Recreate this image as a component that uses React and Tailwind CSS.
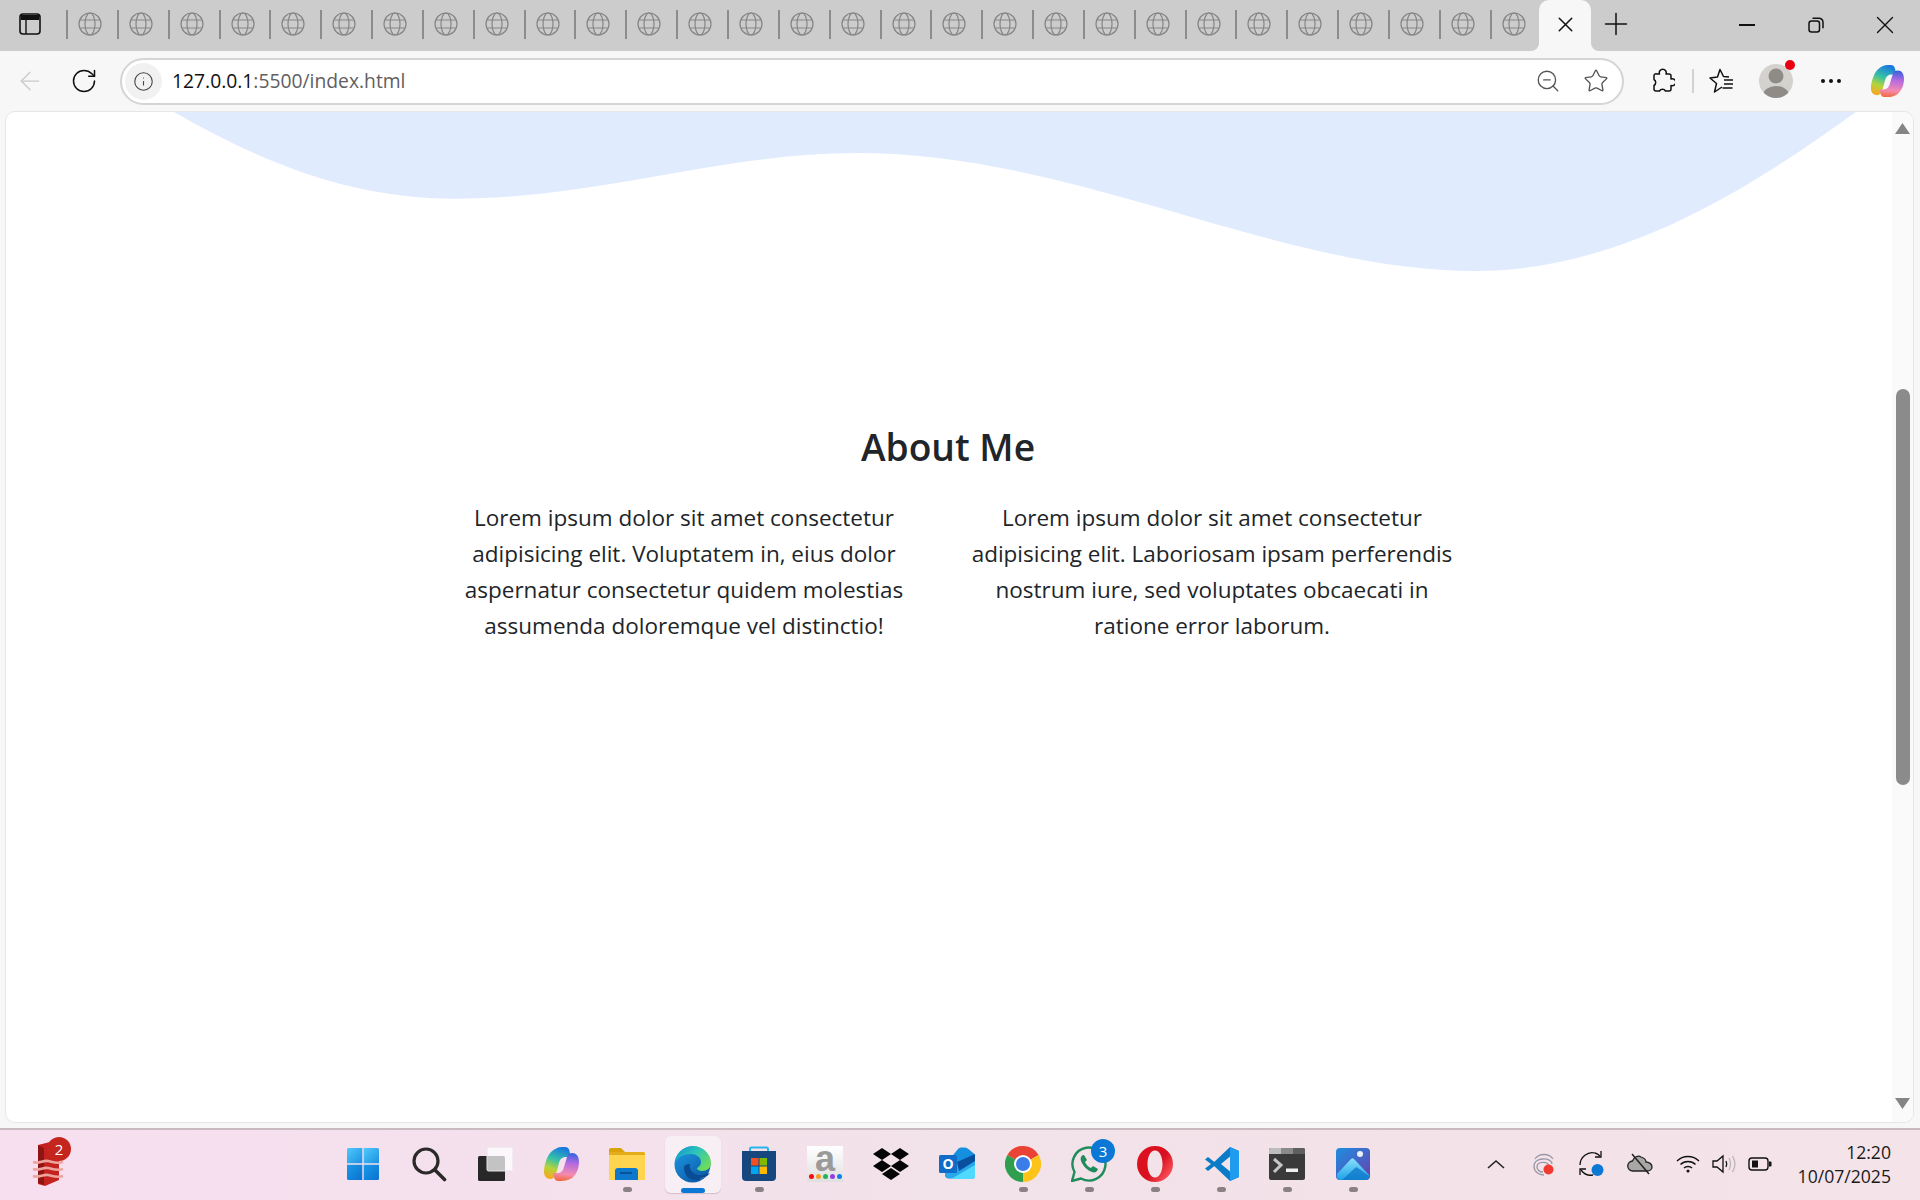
import { ArrowLeft, Info, Plus, RotateCw, Star, X, ZoomOut } from 'lucide-react'

const tabs = Array.from({ length: 29 })

function Globe() {
  return (
    <svg width="24" height="24" viewBox="0 0 24 24" fill="none" stroke="#858585" strokeWidth="1.2">
      <circle cx="12" cy="12" r="11" />
      <ellipse cx="12" cy="12" rx="5" ry="11" />
      <path d="M2 8h20M2 16h20" />
    </svg>
  )
}

function SidebarIcon() {
  return (
    <svg width="22" height="22" viewBox="0 0 22 22" fill="none">
      <rect x="1" y="1" width="20" height="20" rx="3" stroke="#111" strokeWidth="1.6" />
      <path d="M2 2h18v5H2z" fill="#111" />
      <path d="M7 7v14" stroke="#111" strokeWidth="1.4" />
    </svg>
  )
}

function PuzzleIcon() {
  return (
    <svg width="26" height="26" viewBox="0 0 26 26" fill="none" stroke="#111" strokeWidth="1.5" strokeLinejoin="round">
      <path d="M8 6h2.500a3.500 3.500 0 1 1 6.500 0H20a2 2 0 0 1 2 2v3a3.500 3.500 0 1 1 0 6.500V21a2 2 0 0 1-2 2h-3.500a3.500 3.500 0 0 0-6 0H7a2 2 0 0 1-2-2v-3.500a3.500 3.500 0 0 0 0-6V8a2 2 0 0 1 3-2z" />
    </svg>
  )
}

function FavoritesIcon() {
  return (
    <svg width="26" height="26" viewBox="0 0 26 26" fill="none" stroke="#111" strokeWidth="1.5" strokeLinejoin="round">
      <path d="M13 19L5.500 24L7.500 15.500L1 10L8.500 9L11 1.500L14.500 8.500L20 9" />
      <path d="M15 12h9M15 16h9M13.500 20h10" />
    </svg>
  )
}

function RestoreIcon() {
  return (
    <svg width="16" height="16" viewBox="0 0 16 16" fill="none" stroke="#111" strokeWidth="1.5">
      <rect x="1" y="4" width="10.500" height="11" rx="2.500" />
      <path d="M4.500 1.200h6.500a4 4 0 0 1 4 4v6" />
    </svg>
  )
}

function Avatar() {
  return (
    <svg width="36" height="36" viewBox="0 0 36 36">
      <defs>
        <clipPath id="avatarClip">
          <circle cx="18" cy="18" r="17" />
        </clipPath>
      </defs>
      <circle cx="18" cy="18" r="17" fill="#d4d2cf" />
      <g clipPath="url(#avatarClip)" fill="#8f8b87">
        <circle cx="18" cy="13" r="7.500" />
        <ellipse cx="18" cy="32" rx="13" ry="9" />
      </g>
    </svg>
  )
}

function Copilot({ id, size }) {
  return (
    <svg width={size} height={size} viewBox="0 0 36 36">
      <defs>
        <linearGradient id={`${id}a`} x1="0.6" y1="0" x2="0.3" y2="1">
          <stop offset="0" stopColor="#1a78e0" />
          <stop offset="0.4" stopColor="#35c1a8" />
          <stop offset="0.7" stopColor="#b4d43a" />
          <stop offset="1" stopColor="#f7a823" />
        </linearGradient>
        <linearGradient id={`${id}b`} x1="0.5" y1="0" x2="0.4" y2="1">
          <stop offset="0" stopColor="#3a62e0" />
          <stop offset="0.35" stopColor="#b66ae0" />
          <stop offset="0.75" stopColor="#f48bb0" />
          <stop offset="1" stopColor="#f26a3c" />
        </linearGradient>
      </defs>
      <path d="M19 1h3c2.500 0 4 1.500 4.500 4L28 11h-5c-4 0-6 2-7 6l-3 11c-1 3-3 5-6 5-3.500 0-6-3-6-7 0-7 3-16 7-20 3-3 7-5 11-5z" fill={`url(#${id}a)`} />
      <path d="M18 35h-3c-2 0-3.500-1.500-4-4l-1-4h4c4 0 6-2 7-6l3-10c1-3 3-4 5.500-4 4 0 6.500 3.500 6.500 9 0 7-3 13-7 16-3 2-7 3-11 3z" fill={`url(#${id}b)`} />
    </svg>
  )
}

function RedStack() {
  return (
    <svg width="32" height="46" viewBox="0 0 32 46">
      <path d="M6 4l12-3 9 4v34l-14 6-7-2z" fill="#c3221f" />
      <path d="M6 4l6 3v37l-6-2z" fill="#8f1514" />
      <g fill="none" stroke="#eda49c" strokeWidth="2.600">
        <path d="M1 21c6 2 10-2 15-1s9 3 15 1" />
        <path d="M1 28c6 2 10-2 15-1s9 3 15 1" />
        <path d="M1 35c6 2 10-2 15-1s9 3 15 1" />
      </g>
    </svg>
  )
}

function WindowsLogo() {
  return (
    <svg width="36" height="36" viewBox="0 0 36 36">
      <defs>
        <linearGradient id="winTop" x1="0" y1="0" x2="1" y2="1">
          <stop offset="0" stopColor="#52c9fb" />
          <stop offset="1" stopColor="#1a90e2" />
        </linearGradient>
        <linearGradient id="winBottom" x1="0" y1="0" x2="1" y2="1">
          <stop offset="0" stopColor="#1a9ae8" />
          <stop offset="1" stopColor="#0a72d0" />
        </linearGradient>
      </defs>
      <path d="M2 3.500A1.500 1.500 0 0 1 3.500 2H17.300v15.300H2z" fill="url(#winTop)" />
      <path d="M18.700 2H32.500A1.500 1.500 0 0 1 34 3.500V17.300H18.700z" fill="url(#winTop)" />
      <path d="M2 18.700H17.300V34H3.500A1.500 1.500 0 0 1 2 32.500z" fill="url(#winBottom)" />
      <path d="M18.700 18.700H34V32.500A1.500 1.500 0 0 1 32.500 34H18.700z" fill="url(#winBottom)" />
    </svg>
  )
}

function SearchIcon() {
  return (
    <svg width="36" height="36" viewBox="0 0 36 36" fill="none" stroke="#2b2828" strokeWidth="3.200" strokeLinecap="round">
      <circle cx="15" cy="15" r="12" />
      <path d="M24 24l9.500 9.500" strokeWidth="3.600" />
    </svg>
  )
}

function TaskView() {
  return (
    <svg width="36" height="36" viewBox="0 0 36 36">
      <rect x="1" y="10" width="27" height="25" rx="1.500" fill="#282828" />
      <rect x="10" y="1" width="26" height="24" rx="1.500" fill="#ffffff" fillOpacity="0.72" stroke="#e8e2e5" />
    </svg>
  )
}

function Explorer() {
  return (
    <svg width="36" height="36" viewBox="0 0 36 36">
      <path d="M0 4a2 2 0 0 1 2-2h10l4 4H0z" fill="#dba30a" />
      <path d="M0 6h34a2 2 0 0 1 2 2v26H0z" fill="#ffd54f" />
      <path d="M0 6h34a2 2 0 0 1 2 2v1H0z" fill="#e3ac18" />
      <path d="M6 34V25a3 3 0 0 1 3-3h17a3 3 0 0 1 3 3v9z" fill="#0c79cf" />
      <path d="M11 27h12" stroke="#08467f" strokeWidth="1.500" />
    </svg>
  )
}

function Edge() {
  return (
    <svg width="38" height="38" viewBox="0 0 38 38">
      <defs>
        <linearGradient id="edgeBlue" x1="0" y1="0" x2="0.7" y2="1">
          <stop offset="0" stopColor="#1f9de6" />
          <stop offset="1" stopColor="#0b5aa8" />
        </linearGradient>
        <linearGradient id="edgeTop" x1="0" y1="0" x2="1" y2="0.7">
          <stop offset="0" stopColor="#0f8fd0" />
          <stop offset="0.5" stopColor="#2cc5b9" />
          <stop offset="1" stopColor="#6fdc5b" />
        </linearGradient>
      </defs>
      <circle cx="18.500" cy="19.500" r="18" fill="url(#edgeBlue)" />
      <path d="M10 23c0 7 5 12 11 12 6 0 11-2 15-7-5 2-11 3-15 1-4-2-6-7-5-10-3 0-6 1-6 4z" fill="#0a4c93" />
      <path d="M1 17C2 8 10 1 19 1c10 0 18 8 18 17 0 5-4 8-9 8-2 0-5-1-5-3 2-1 4-3 4-6 0-5-5-8-10-8C10 9 4 12 1 17z" fill="url(#edgeTop)" />
      <path d="M37 27c-2 4-7 6-11 6 3 1 8-1 11-6z" fill="#f7eff3" />
    </svg>
  )
}

function Store() {
  return (
    <svg width="36" height="36" viewBox="0 0 36 36">
      <path d="M9 7V3a1.500 1.500 0 0 1 1.500-1.500h15A1.500 1.500 0 0 1 27 3v4" fill="none" stroke="#27b5ee" strokeWidth="2" />
      <path d="M1 5h34v26a4 4 0 0 1-4 4H5a4 4 0 0 1-4-4z" fill="#16487f" />
      <rect x="10" y="12" width="7.500" height="7.500" fill="#f25022" />
      <rect x="18.500" y="12" width="7.500" height="7.500" fill="#7fba00" />
      <rect x="10" y="20.500" width="7.500" height="7.500" fill="#00a4ef" />
      <rect x="18.500" y="20.500" width="7.500" height="7.500" fill="#ffb900" />
    </svg>
  )
}

function AmazonTile() {
  const dots = ['#f01010', '#f5a020', '#22b455', '#9040e0', '#1080e8']
  return (
    <div className="flex h-9 w-9 flex-col items-center bg-linear-to-b from-white to-[#dfdfdf]">
      <span className="h-[26px] font-['Liberation_Sans',sans-serif] text-[36px] leading-[26px] font-bold text-[#9a9a9a]">a</span>
      <div className="mt-[2px] flex gap-[2px]">
        {dots.map((c) => (
          <span key={c} className="h-[5px] w-[5px] rounded-full" style={{ backgroundColor: c }} />
        ))}
      </div>
    </div>
  )
}

function Dropbox() {
  return (
    <svg width="36" height="32" viewBox="0 0 36 32" fill="#050505">
      <path d="M9 0l9 6-9 6-9-6zM27 0l9 6-9 6-9-6zM9 12l9 6-9 6-9-6zM27 12l9 6-9 6-9-6zM18 20l9 6-9 6-9-6z" />
    </svg>
  )
}

function Outlook() {
  return (
    <div className="relative h-9 w-9">
      <svg width="36" height="36" viewBox="0 0 36 36">
        <path d="M6 19l13-16c1-1 2-1.500 4-1.500h2c2 0 3 .5 5 2l6 5v21a3 3 0 0 1-3 3H10a4 4 0 0 1-4-4z" fill="#1490df" />
        <path d="M6 22L36 8v12L18 32H10a4 4 0 0 1-4-4z" fill="#28a8ea" />
        <path d="M18 16l18-8v7l-16 10z" fill="#0a4f9e" />
        <path d="M12 33l24-14v11a3 3 0 0 1-3 3z" fill="#50d9ff" />
        <rect x="0" y="9" width="18" height="18" rx="1.500" fill="#0f6cc9" />
      </svg>
      <span className="absolute top-[9px] left-0 w-[18px] text-center font-['Open_Sans',sans-serif] text-[14px] leading-[18px] font-bold text-white">O</span>
    </div>
  )
}

function Chrome() {
  return (
    <svg width="36" height="36" viewBox="0 0 36 36">
      <path d="M18 18L2.400 9A18 18 0 0 1 33.600 9z" fill="#ea4335" />
      <path d="M18 18L2.400 9A18 18 0 0 0 18 36z" fill="#2f9e4f" />
      <path d="M18 18L33.600 9A18 18 0 0 1 18 36z" fill="#fcc419" />
      <circle cx="18" cy="18" r="9" fill="#fff" />
      <circle cx="18" cy="18" r="7" fill="#3b7de8" />
    </svg>
  )
}

function Whatsapp() {
  return (
    <div className="relative h-9 w-9">
      <svg width="36" height="36" viewBox="0 0 36 36" fill="none">
        <path d="M1 35l2.500-9A16.500 16.500 0 1 1 10 32.500z" stroke="#1f8c5d" strokeWidth="2.400" strokeLinejoin="round" />
        <path d="M12 9c-2 1-3 3-2 6 2 5 6 9 11 11 3 1 5 0 6-3l-5-3-2 2c-3-1-5-4-6-6l2-2-3-5z" fill="#1f8c5d" />
      </svg>
      <span className="absolute -top-[7px] -right-[8px] flex h-6 w-6 items-center justify-center rounded-full bg-[#0a78d4] font-['Open_Sans',sans-serif] text-[15px] text-white">3</span>
    </div>
  )
}

function Opera() {
  return (
    <svg width="36" height="36" viewBox="0 0 36 36">
      <defs>
        <linearGradient id="operaRed" x1="0" y1="0" x2="1" y2="0.800">
          <stop offset="0" stopColor="#e0101f" />
          <stop offset="0.600" stopColor="#d8101f" />
          <stop offset="1" stopColor="#ff5a62" />
        </linearGradient>
      </defs>
      <path fillRule="evenodd" d="M18 0a18 18 0 1 1 0 36a18 18 0 1 1 0-36zM18 4.500c-4.500 0-7.500 6-7.500 13.500s3 13.500 7.500 13.500 7.500-6 7.500-13.500-3-13.500-7.500-13.500z" fill="url(#operaRed)" />
    </svg>
  )
}

function Vscode() {
  return (
    <svg width="36" height="36" viewBox="0 0 36 36">
      <path d="M27 1L9 18l18 17 9-4V5z" fill="#0a7cc7" />
      <path d="M2 13.500L5 11l9 7-9 7-3-2.500L8 18z" fill="#0a7cc7" />
      <path d="M27 10.500L18 18l9 7.500z" fill="#f1e3e7" />
      <path d="M27 1l9 4v26l-9 4z" fill="#1f9cf0" />
    </svg>
  )
}

function Terminal() {
  return (
    <svg width="36" height="32" viewBox="0 0 36 32">
      <rect x="0" y="0" width="36" height="32" rx="2" fill="#3a3a3a" />
      <path d="M0 2a2 2 0 0 1 2-2h10v6H0z" fill="#bdbdbd" />
      <path d="M12 0h12v6H12z" fill="#8a8a8a" />
      <path d="M24 0h10a2 2 0 0 1 2 2v4H24z" fill="#5f5f5f" />
      <path d="M5 11l7 6-7 7" fill="none" stroke="#c6c6c6" strokeWidth="3" />
      <rect x="17" y="20.500" width="12" height="3.500" fill="#f0f0f0" />
    </svg>
  )
}

function Photos() {
  return (
    <svg width="34" height="34" viewBox="0 0 34 34">
      <defs>
        <linearGradient id="photoBg" x1="0" y1="0" x2="1" y2="1">
          <stop offset="0" stopColor="#1c8fe0" />
          <stop offset="1" stopColor="#6a3fb0" />
        </linearGradient>
        <linearGradient id="photoHill" x1="0" y1="0" x2="0" y2="1">
          <stop offset="0" stopColor="#8ae0fa" />
          <stop offset="1" stopColor="#1ca2e8" />
        </linearGradient>
      </defs>
      <rect width="34" height="32" y="1" rx="4" fill="url(#photoBg)" />
      <circle cx="24" cy="7" r="3" fill="#f0eef8" />
      <path d="M1 27L15 12c1-1 2-1 3 0l15 16v1a4 4 0 0 1-4 4H5a4 4 0 0 1-4-4z" fill="url(#photoHill)" />
      <path d="M6 33l13-12c1-1 2-1 3 0l11 8a4 4 0 0 1-4 4z" fill="#0e74c8" opacity="0.75" />
    </svg>
  )
}

const taskbarApps = [
  { id: 'start', icon: <WindowsLogo /> },
  { id: 'search', icon: <SearchIcon /> },
  { id: 'taskview', icon: <TaskView /> },
  { id: 'copilot', icon: <Copilot id="taskCopilot" size={36} /> },
  { id: 'explorer', icon: <Explorer />, open: true },
  { id: 'edge', icon: <Edge />, active: true },
  { id: 'store', icon: <Store />, open: true },
  { id: 'amazon', icon: <AmazonTile /> },
  { id: 'dropbox', icon: <Dropbox /> },
  { id: 'outlook', icon: <Outlook /> },
  { id: 'chrome', icon: <Chrome />, open: true },
  { id: 'whatsapp', icon: <Whatsapp />, open: true },
  { id: 'opera', icon: <Opera />, open: true },
  { id: 'vscode', icon: <Vscode />, open: true },
  { id: 'terminal', icon: <Terminal />, open: true },
  { id: 'photos', icon: <Photos />, open: true },
]

function TrayIcons() {
  return (
    <div className="ml-[86px] flex items-center">
      <div className="flex w-12 justify-center">
        <svg width="18" height="10" viewBox="0 0 18 10" fill="none" stroke="#222" strokeWidth="1.600">
          <path d="M1 9l8-7 8 7" />
        </svg>
      </div>
      <div className="flex w-12 justify-center">
        <svg width="22" height="24" viewBox="0 0 22 24" fill="none" stroke="#9a98a8" strokeWidth="1.300">
          <path d="M2 7c4-6 14-6 18 0" />
          <path d="M1 14c0-9 18-9 18-2" />
          <path d="M4 15c0-6 11-6 12-1" />
          <path d="M1 14c0 6 5 9 10 9M4 15c0 3 3 5 6 5" />
          <circle cx="15.500" cy="17.500" r="5" fill="#f03a30" stroke="none" />
        </svg>
      </div>
      <div className="flex w-12 justify-center">
        <svg width="26" height="26" viewBox="0 0 26 26" fill="none" stroke="#111" strokeWidth="1.300">
          <path d="M1 14C1 6 9 0 16 2c2 .5 3 1 5 3" />
          <path d="M22 0v6h-6" />
          <path d="M14 24C9 25 5 23 2 19" />
          <path d="M1 24v-6h6" />
          <circle cx="18.500" cy="19" r="6" fill="#0a78d4" stroke="none" />
        </svg>
      </div>
      <div className="flex w-12 justify-center">
        <svg width="26" height="22" viewBox="0 0 26 22" fill="none" stroke="#222" strokeWidth="1.300">
          <path d="M6 18a5 5 0 0 1-.5-10C7 4 11 2 14 4c3 1 5 3 5 5 3 0 6 2 6 5 0 2-2 4-5 4z" fill="#a9a6a6" />
          <path d="M5 1l17 20" strokeWidth="1.500" />
        </svg>
      </div>
      <div className="ml-[6px] flex w-9 justify-center">
        <svg width="24" height="18" viewBox="0 0 24 18" fill="none" stroke="#111" strokeWidth="1.400">
          <path d="M1 6c6-6 16-6 22 0M4.500 9.500c4-4 11-4 15 0M8 13c2-2 6-2 8 0" />
          <circle cx="12" cy="16" r="1.500" fill="#111" stroke="none" />
        </svg>
      </div>
      <div className="flex w-9 justify-center">
        <svg width="24" height="20" viewBox="0 0 24 20" fill="none" strokeWidth="1.300">
          <path d="M1 7h4l6-5v16l-6-5H1z" stroke="#111" />
          <path d="M14 7c1 2 1 4 0 6" stroke="#111" />
          <path d="M17 4c2 4 2 8 0 12M20.500 2c3 5 3 11 0 16" stroke="#bdb4b8" />
        </svg>
      </div>
      <div className="flex w-9 justify-center">
        <svg width="24" height="14" viewBox="0 0 24 14" fill="none">
          <rect x="1" y="1" width="19" height="12" rx="3" stroke="#111" strokeWidth="1.400" />
          <rect x="4" y="3.500" width="6" height="7" fill="#111" />
          <path d="M21 4.500h1.500a1 1 0 0 1 1 1v3a1 1 0 0 1-1 1H21z" fill="#111" />
        </svg>
      </div>
    </div>
  )
}

export default function App() {
  return (
    <div className="flex h-screen w-screen flex-col overflow-hidden bg-[#f7f7f7] font-['Open_Sans','Noto_Sans',sans-serif]">
      {/* title bar */}
      <div className="flex h-[51px] shrink-0 items-stretch bg-[#cccccc]">
        <div className="flex w-[60px] items-center justify-center pb-[3px]">
          <SidebarIcon />
        </div>
        <div className="ml-[6px] flex">
          {tabs.map((_, i) => (
            <div key={i} className="flex w-[50.850px] items-center pb-[3px]">
              <div className="h-[29px] w-[2px] bg-[#8c8c8c]" />
              <div className="ml-[10px]">
                <Globe />
              </div>
            </div>
          ))}
        </div>
        <div className="relative -ml-[1px] flex w-[52px] items-center justify-center rounded-t-[10px] bg-[#f7f7f7] pb-[3px]">
          <X size={25} strokeWidth={1.4} color="#111" />
          <svg className="absolute bottom-0 -left-[8px]" width="8" height="8" viewBox="0 0 8 8">
            <path d="M8 0v8H0a8 8 0 0 0 8-8z" fill="#f7f7f7" />
          </svg>
          <svg className="absolute -right-[8px] bottom-0" width="8" height="8" viewBox="0 0 8 8">
            <path d="M0 0v8h8a8 8 0 0 1-8-8z" fill="#f7f7f7" />
          </svg>
        </div>
        <div className="flex w-[50px] items-center justify-center pb-[3px]">
          <Plus size={36} strokeWidth={1} color="#111" />
        </div>
        <div className="mr-px ml-auto flex">
          <div className="flex w-[69px] items-center justify-center pb-px">
            <div className="h-[2px] w-4 bg-[#111]" />
          </div>
          <div className="flex w-[69px] items-center justify-center pb-px">
            <RestoreIcon />
          </div>
          <div className="flex w-[69px] items-center justify-center pb-px">
            <X size={30} strokeWidth={1.1} color="#111" />
          </div>
        </div>
      </div>

      {/* toolbar */}
      <div className="flex h-[60px] shrink-0 items-center">
        <div className="ml-[3px] flex w-[54px] justify-center">
          <ArrowLeft size={30} strokeWidth={1} color="#c9c9c9" />
        </div>
        <div className="flex w-[54px] justify-center">
          <RotateCw size={28} strokeWidth={1.3} color="#111" />
        </div>
        <div className="ml-[9px] flex h-[47px] w-[1504px] items-center rounded-full border-2 border-[#d4d4d4] bg-white pr-[13px] pl-[3px]">
          <div className="flex h-[37px] w-[37px] items-center justify-center rounded-full bg-[#f1f1f1]">
            <Info size={21} strokeWidth={1.25} color="#444" />
          </div>
          <span className="ml-[10px] text-[19.300px] text-[#5f5f5f]">
            <span className="text-[#111]">127.0.0.1</span>:5500/index.html
          </span>
          <div className="ml-auto flex items-center gap-[22px]">
            <ZoomOut size={26} strokeWidth={1.25} color="#555" />
            <Star size={26} strokeWidth={1.25} color="#555" />
          </div>
        </div>
        <div className="ml-[14px] flex w-12 justify-center">
          <PuzzleIcon />
        </div>
        <div className="ml-[6px] h-6 w-[2px] bg-[#d2d2d2]" />
        <div className="ml-[4px] flex w-12 justify-center">
          <FavoritesIcon />
        </div>
        <div className="relative ml-[6px] flex w-12 justify-center">
          <Avatar />
          <span className="absolute -top-[3px] right-[5px] h-[10px] w-[10px] rounded-full bg-[#e60012]" />
        </div>
        <div className="ml-[7px] flex w-12 justify-center gap-[4px]">
          <span className="h-[4px] w-[4px] rounded-full bg-[#111]" />
          <span className="h-[4px] w-[4px] rounded-full bg-[#111]" />
          <span className="h-[4px] w-[4px] rounded-full bg-[#111]" />
        </div>
        <div className="ml-[8px] flex w-12 justify-center">
          <Copilot id="barCopilot" size={34} />
        </div>
      </div>

      {/* page */}
      <div className="min-h-0 flex-1 pr-[6px] pl-[5px] pb-[5px]">
        <div className="flex h-full overflow-hidden rounded-[10px] border border-[#e6e6e6] bg-white">
          <main className="min-w-0 flex-1 pr-[2px] text-[#212529]">
            <svg className="block" width="1886" height="161" viewBox="-1 0 1886 161">
              <path
                d="M167 0C262 55 350 86.700 448 86.700C590 86.700 715 41 850 41C1070 41 1270 159 1468 159C1615 159 1745 75 1849 0Z"
                fill="#e0ecfe"
              />
            </svg>
            <h2 className="mt-[150px] text-center text-[37.200px] leading-[48px] font-semibold">About Me</h2>
            <div className="mt-[29px] flex justify-center gap-[28px] text-center text-[22.500px] leading-[36px]">
              <p className="w-[500px]">
                Lorem ipsum dolor sit amet consectetur adipisicing elit. Voluptatem in, eius dolor aspernatur consectetur quidem molestias assumenda doloremque vel distinctio!
              </p>
              <p className="w-[500px]">
                Lorem ipsum dolor sit amet consectetur adipisicing elit. Laboriosam ipsam perferendis nostrum iure, sed voluptates obcaecati in ratione error laborum.
              </p>
            </div>
          </main>
          <div className="flex w-[21px] shrink-0 flex-col items-center bg-[#fafafa] pt-[11px] pb-[13px]">
            <svg width="15" height="11" viewBox="0 0 15 11">
              <path d="M7.500 0L15 11H0z" fill="#858585" />
            </svg>
            <div className="mt-[255px] h-[396px] w-[14px] rounded-full bg-[#8b8b8b]" />
            <svg className="mt-auto" width="15" height="11" viewBox="0 0 15 11">
              <path d="M7.500 11L15 0H0z" fill="#858585" />
            </svg>
          </div>
        </div>
      </div>

      {/* taskbar */}
      <div className="flex h-[72px] shrink-0 items-stretch border-t-2 border-[#c9bac0] bg-linear-to-r from-[#f7dff0] via-[#f2e2e9] to-[#f4e3e8] pb-[2px]">
        <div className="relative flex w-[330px] items-center pl-[32px]">
          <div className="relative">
            <RedStack />
            <span className="absolute -top-[4px] left-[15px] flex h-[24px] w-[24px] items-center justify-center rounded-full bg-[#c4261d] text-[15px] text-white">2</span>
          </div>
        </div>
        {taskbarApps.map((app) => (
          <div key={app.id} className="relative flex w-[66px] items-center justify-center">
            {app.active && (
              <div className="absolute top-[6px] left-[5px] h-[57px] w-[56px] rounded-[6px] bg-[#f7eff3] shadow-[0_1px_1px_rgba(120,90,100,0.25)]" />
            )}
            <div className="relative">{app.icon}</div>
            {app.open && (
              <span className="absolute bottom-[6px] left-[29px] h-[5px] w-[9px] rounded-full bg-[#8b8185]" />
            )}
            {app.active && (
              <span className="absolute bottom-[5px] left-[21px] h-[5px] w-[24px] rounded-full bg-[#0a78d4]" />
            )}
          </div>
        ))}
        <TrayIcons />
        <div className="ml-auto flex flex-col items-end justify-center pr-[29px] text-[17.600px] leading-[24px] text-[#1a1a1a]">
          <span>12:20</span>
          <span>10/07/2025</span>
        </div>
      </div>
    </div>
  )
}
